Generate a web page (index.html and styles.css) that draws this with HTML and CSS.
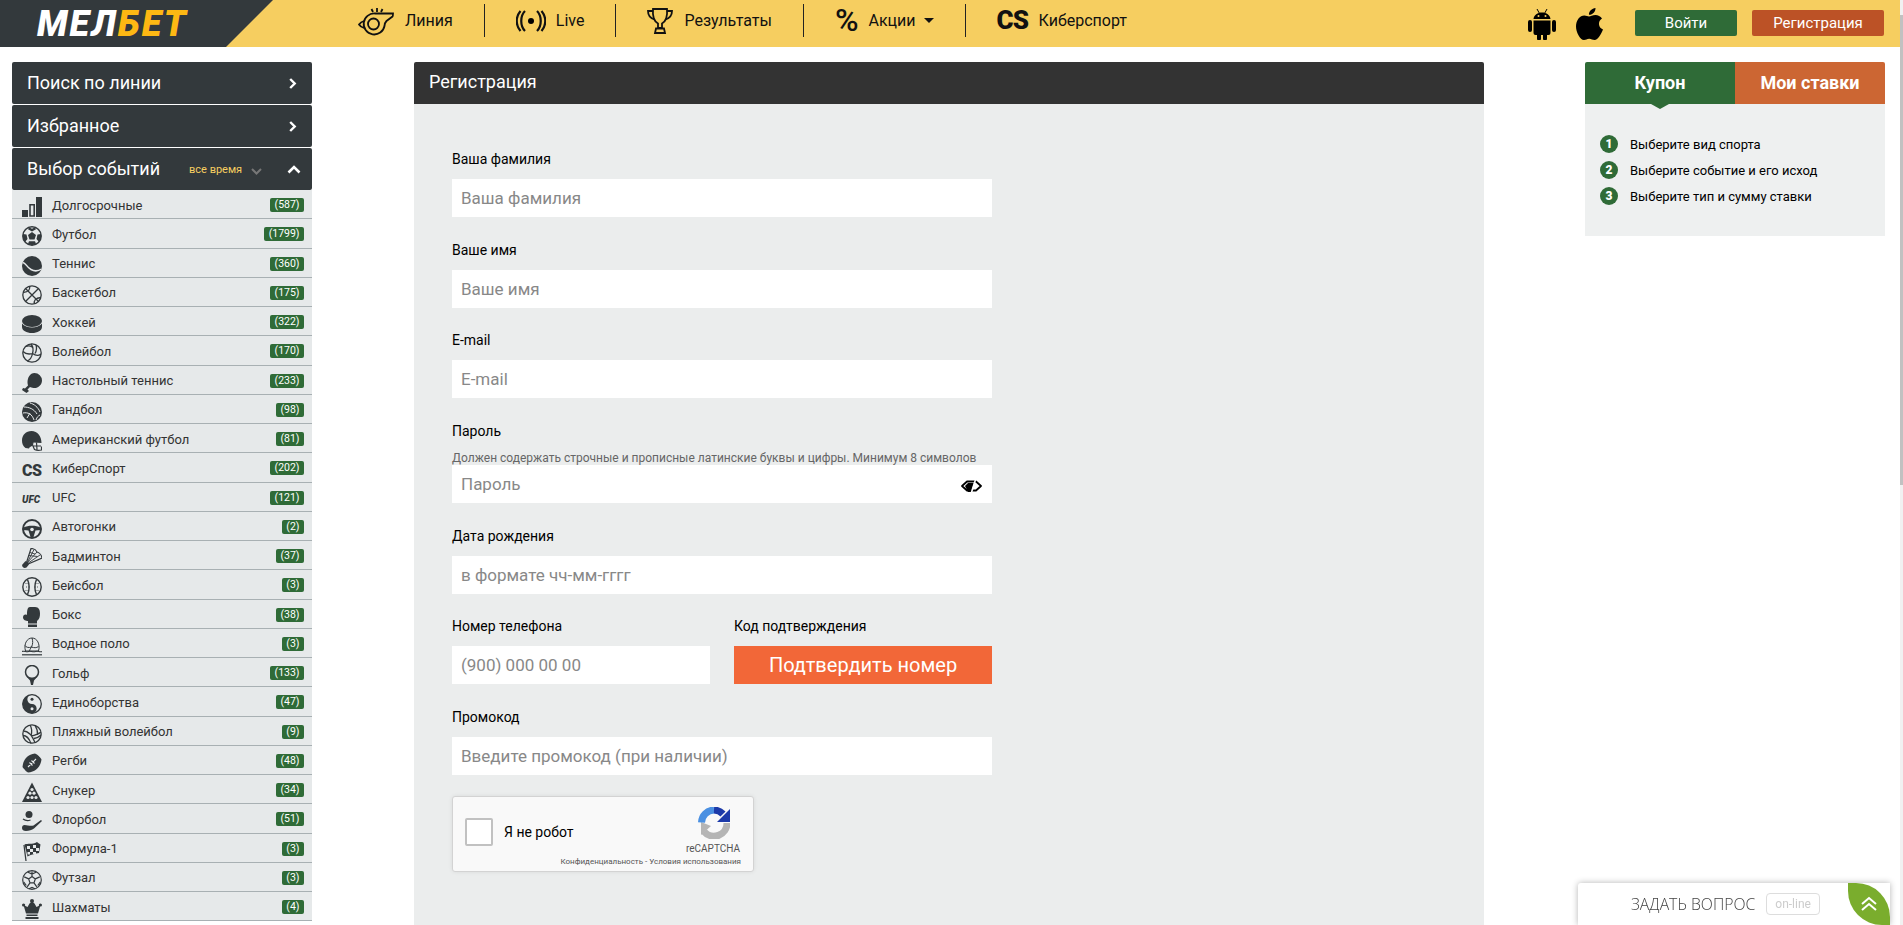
FILE: index.html
```html
<!DOCTYPE html>
<html lang="ru">
<head>
    <meta charset="utf-8">
    <title>Регистрация</title>
    <link rel="stylesheet" href="styles.css">
</head>
<body>
    <!-- sport icons -->
    <svg class="sprite" xmlns="http://www.w3.org/2000/svg">
        <symbol id="i-chev" viewBox="0 0 8 11"><path d="M1.200 1l4.500 4.500-4.500 4.500" fill="none" stroke="#fff" stroke-width="2.400"/></symbol>
        <symbol id="i-long" viewBox="0 0 20 20"><path d="M0 13h6v7H0zM14 0h6v20h-6z"/><path d="M8 7.800h4.200V19H8z" fill="none" stroke="currentColor" stroke-width="1.600"/></symbol>
        <symbol id="i-football" viewBox="0 0 20 20"><circle cx="10" cy="10" r="9.200" fill="none" stroke="currentColor" stroke-width="1.500"/><path d="M10 6l4 3-1.500 4.600h-5L6 9zM7 1.200l3 1.600 3-1.600 1 2-4 2.400-4-2.400zM1 8l3.500.5L5.500 13l-2.500 3L1 13zM19 8l-3.500.5L14.500 13l2.500 3 2-3zM7 15.200h6l1 2.500-4 1.600-4-1.600z"/></symbol>
        <symbol id="i-tennis" viewBox="0 0 20 20"><circle cx="10" cy="10" r="10"/><path d="M.8 6.500C4 7 4.500 11 9 13.500c3.500 2 7.500 1.500 10.500-.5" fill="none" stroke="#e6e9ea" stroke-width="1.500"/></symbol>
        <symbol id="i-basket" viewBox="0 0 20 20"><g fill="none" stroke="currentColor" stroke-width="1.300"><circle cx="10" cy="10" r="9.200"/><path d="M3.500 3.500l13 13M16.500 3.500l-13 13M7.500 1c1 3-.5 6-6.500 6.500M12.500 19c-1-3 .5-6 6.500-6.500"/></g></symbol>
        <symbol id="i-puck" viewBox="0 0 20 20"><ellipse cx="10" cy="7" rx="10" ry="6"/><path d="M0 9.500C2 12 6 13.500 10 13.500s8-1.500 10-4v3.500c0 3.500-4.500 6-10 6S0 16.500 0 13z"/></symbol>
        <symbol id="i-volley" viewBox="0 0 20 20"><g fill="none" stroke="currentColor" stroke-width="1.300"><circle cx="10" cy="10" r="9.200"/><path d="M9 1c2 2.500 2.500 6 1.500 9.500M10.500 10.500C7 11.500 3.500 11 1 8.500M10.500 10.500c2.500 1.800 6 2.500 8.500.5M10.500 10.500c-.5 3-2.500 6.500-5.500 7.500M14 2c1 3 .5 6-1 8.500M4 3.500c2.500-1 4.500-.5 6 .5"/></g></symbol>
        <symbol id="i-pong" viewBox="0 0 20 20"><path d="M12.500 0a7.500 7.500 0 0 1 7.500 7.500c0 4.500-4 8-8.500 7.500-1.500-.2-3-1-3.500-1L5.500 16.500 7 18l-2.500 2L0 17l1-2 2 .5L6 12.500c0-.5-.5-1.500-.5-3C5.500 4.500 8 0 12.500 0z"/></symbol>
        <symbol id="i-hand" viewBox="0 0 20 20"><circle cx="10" cy="10" r="10"/><path d="M2 5c5 0 10 2 13 7M1 11c5-1 9 1 11 7M8 1c4 1 8 4 10 9M18 13c-2 1-3 2-4 5M5 16l3-5" fill="none" stroke="#e6e9ea" stroke-width="1"/></symbol>
        <symbol id="i-helmet" viewBox="0 0 20 20"><path d="M9.500 0C4 0 0 4 0 9.500c0 3 1 5.500 3.500 7.500l3.500.5c.5-1.500 1.500-2 3-2.500l1-3.500 8.500.5C19.500 5 15.500 0 9.500 0z"/><path d="M11 11l-.5 3 2 4.500c2 1 4.500 1 7 .5v-3.500M11 15h8M14.500 11.500l.5 7" fill="none" stroke="currentColor" stroke-width="1.200"/></symbol>
        <symbol id="i-wheel" viewBox="0 0 20 20"><circle cx="10" cy="10" r="9" fill="none" stroke="currentColor" stroke-width="2"/><path d="M1.500 8.500C6 6 14 6 18.500 8.500V11l-5 .5-2 6.500h-3l-2-6.500-5-.5z"/><circle cx="10" cy="10.500" r="1.800" fill="#e6e9ea"/></symbol>
        <symbol id="i-shuttle" viewBox="0 0 20 20"><path d="M4.500 14.500L9 .5c3 0 5 1.500 6 3.500 2 .5 4.500 3 5 6L6 16z" fill="none" stroke="currentColor" stroke-width="1.200"/><path d="M5 15L12 1.500M5 15L15 4M5.500 15.500L18 7M6.500 7.500l9 1M8 4.500l5 1.500" fill="none" stroke="currentColor" stroke-width=".9"/><path d="M3.500 13l3.500 3.500-2.500 3c-2 1.200-4 .2-4.500-2.500z"/></symbol>
        <symbol id="i-base" viewBox="0 0 20 20"><g fill="none" stroke="currentColor" stroke-width="1.400"><circle cx="10" cy="10" r="9.200"/><path d="M5.500 2.500c2 4.500 2 10.500 0 15M14.500 2.500c-2 4.500-2 10.500 0 15"/></g><path d="M3.500 6.500h3M4 10h3M3.500 13.500h3M13.500 6.500h3M13 10h3M13.500 13.500h3" stroke="currentColor" stroke-width=".8" stroke-dasharray="1 1"/></symbol>
        <symbol id="i-box" viewBox="0 0 20 20"><path d="M8 0h5c4 0 5 3 5 6.500 0 3-.5 5.500-3 7.500v2.500H6V14c-2 0-5-1-5-3.500C1 8 3 7 5 8c0-3 0-8 3-8z"/><path d="M6 17.500h9V20H6z"/></symbol>
        <symbol id="i-polo" viewBox="0 0 20 20"><g fill="none" stroke="currentColor" stroke-width="1"><path d="M3.500 15C1.500 8 5 2 10 2s8.500 6 6.500 13zM10 2c1 3 1 6-.5 9M9.500 11C7 12 4 11.500 3 9.500M9.500 11c2.500 1 5 1 7-.5M9.500 11c-1 1.500-2 3-2 4"/><path d="M0 15.500c3-1 4 1 6.500 0s4 1 7 0 4 1 6.500 0" stroke-width="1.200"/><path d="M0 18.800h20" stroke-width="1.200"/></g></symbol>
        <symbol id="i-golf" viewBox="0 0 20 20"><circle cx="10" cy="7" r="6.500" fill="none" stroke="currentColor" stroke-width="1.500"/><path d="M4.500 11.500c2 1.800 9 1.800 11 0L12 15.500l-1 4.500H9l-1-4.500z"/></symbol>
        <symbol id="i-yin" viewBox="0 0 20 20"><circle cx="10" cy="10" r="9.300" fill="none" stroke="currentColor" stroke-width="1.300"/><path d="M10 .7a9.300 9.300 0 0 0 0 18.600 4.650 4.650 0 0 0 0-9.300 4.650 4.650 0 0 1 0-9.300z"/><circle cx="10" cy="5.300" r="1.500"/><circle cx="10" cy="14.700" r="1.500" fill="#e6e9ea"/></symbol>
        <symbol id="i-beach" viewBox="0 0 20 20"><g fill="none" stroke="currentColor" stroke-width="1.300"><circle cx="10" cy="10" r="9.200"/><path d="M1.500 7c4 0 8 3 11.500 11.500M1 11.500c3 0 6 2.500 8 8M8 1c2 3 2 7 1 11M13 1.500c2 3 3 6 2.500 9.500M9 12c3-.5 7-1.500 10-4M12 14.500c3-.5 5-1.500 7-3.500"/></g></symbol>
        <symbol id="i-rugby" viewBox="0 0 20 20"><path d="M13 .5C5 1.500 1 7 .5 14c1 2 3.500 4.500 5.500 5.500 7-.5 12.500-5 13.500-13C18.500 4 15.500 1.500 13 .5z"/><path d="M6 14l8-8M7.500 9.500l3 3M9.500 7.500l3 3M3 18L1 16M19 4l-2-2" fill="none" stroke="#e6e9ea" stroke-width="1.100"/></symbol>
        <symbol id="i-snooker" viewBox="0 0 20 20"><path d="M10 .5L20 20H0z"/><g fill="#e6e9ea"><circle cx="10" cy="7.500" r="1.600"/><circle cx="8" cy="11.200" r="1.600"/><circle cx="12" cy="11.200" r="1.600"/><circle cx="6" cy="15.500" r="1.600"/><circle cx="10" cy="15.500" r="1.600"/><circle cx="14" cy="15.500" r="1.600"/></g></symbol>
        <symbol id="i-floor" viewBox="0 0 20 20"><circle cx="7" cy="3.500" r="3.500"/><path d="M1 8c2 1.500 5 2 7.500 1" fill="none" stroke="currentColor" stroke-width="1.300"/><path d="M20 10l-8 7.500c-2 1.500-5 2.500-8 2.500-2.500 0-4-1-4-3s1-3 2.500-3c3 0 6 1.500 9 .5L19 9z"/></symbol>
        <symbol id="i-flag" viewBox="0 0 20 20"><path d="M4 20L2 4" stroke="currentColor" stroke-width="1.200"/><path d="M2.500 3.500C6 2 10 4 15 1c1 1 3 2 3.500 2.500L17 12c-4 1-7 1-11.500 3.500z"/><path d="M5 5h3v3H5zM11 4h3v3h-3zM8 8h3v3H8zM14 7h3v3h-3zM5.500 11h2.500v2.500H5.500zM11 11h3v2h-3z" fill="#e6e9ea"/></symbol>
        <symbol id="i-futsal" viewBox="0 0 20 20"><g fill="none" stroke="currentColor" stroke-width="1.200"><circle cx="10" cy="10" r="9.300"/><path d="M10 6.500l3.300 2.400-1.300 4h-4l-1.300-4zM10 6.500V1.500M13.300 8.900l4.500-2M12 12.900l2.800 4M8 12.900l-2.800 4M6.700 8.900l-4.500-2M6 2.200L10 4l4-1.800M1.800 12l2.500 3.500M18.200 12l-2.500 3.500M7 18.800L10 17.500l3 1.300"/></g></symbol>
        <symbol id="i-chess" viewBox="0 0 20 20"><circle cx="1.600" cy="6" r="1.600"/><circle cx="18.400" cy="6" r="1.600"/><circle cx="10" cy="2" r="2"/><path d="M1.500 6l4 2 2-3.500 2.500-2 2.500 2 2 3.500 4-2-2.500 8.500h-12zM4.500 15.500h11v1.500h-11zM3.500 18h13v2h-13z"/></symbol>
    </svg>

    <header class="header">
        <a class="logo-wrap" href="#"><span class="logo">МЕЛ<b>БЕТ</b></span></a>
        <nav class="nav">
            <a class="nav-item first" href="#">
                <svg class="whistle" width="36" height="32" viewBox="0 0 36 32"><g fill="none" stroke="#111" stroke-width="1.800"><path d="M35 8.500H17a10.500 10.500 0 1 0 9.500 12.500c0-2 .5-3.500 2-5l6-4.500c.5-.5.5-3 .5-3z"/><circle cx="15.500" cy="19" r="5.500"/><path d="M6 16c-2 .5-4 2-5 3.500 1 1.500 3 3 5 3.500"/><path d="M19 7V3M15 7l-1.500-3M23 7l1.500-3"/></g></svg>
                Линия
            </a>
            <a class="nav-item" href="#">
                <svg width="30" height="24" viewBox="0 0 30 24"><path d="M9 2C4 7 4 17 9 22M21 2c5 5 5 15 0 20M4.500 2C-.5 8-.5 16 4.500 22M25.500 2c5 6 5 14 0 20" fill="none" stroke="#111" stroke-width="2.200"/><circle cx="15" cy="12" r="3"/></svg>
                Live
            </a>
            <a class="nav-item" href="#">
                <svg class="trophy" width="26" height="26" viewBox="0 0 26 26"><g fill="none" stroke="#111" stroke-width="1.800"><path d="M6 1h14c.5 6-.5 12-5 14.500v4.500h-4v-4.500C6.500 13 5.500 7 6 1z"/><path d="M6 3H1c0 4 2 7 6.500 8.500M20 3h5c0 4-2 7-6.500 8.500"/><path d="M9 20.500h8l1 4.500H8z"/></g></svg>
                Результаты
            </a>
            <a class="nav-item" href="#">
                <span class="percent">%</span>
                Акции <i class="caret"></i>
            </a>
            <a class="nav-item last" href="#">
                <span class="cs-logo">CS</span>
                Киберспорт
            </a>
        </nav>
        <div class="header-right">
            <svg class="android" width="28" height="32" viewBox="0 0 28 32"><path d="M5.500 11C6 7 9.500 4.500 14 4.500S22 7 22.500 11zM5.500 12.500h17V25a2 2 0 0 1-2 2H19v3.500a2 2 0 0 1-4 0V27h-2v3.500a2 2 0 0 1-4 0V27H7.500a2 2 0 0 1-2-2z"/><rect y="12" width="4" height="12" rx="2"/><rect x="24" y="12" width="4" height="12" rx="2"/><path d="M9 1l2.500 4.500M19 1l-2.500 4.500" stroke="#000" stroke-width="1"/><circle cx="10.500" cy="8" r="1" fill="#f6ce60"/><circle cx="17.500" cy="8" r="1" fill="#f6ce60"/></svg>
            <svg class="apple" width="27" height="32" viewBox="0 0 27 32"><path d="M19.500 0c.2 3.500-3 7-6.500 6.800C12.500 3.500 16 .3 19.500 0zM13 8.500c1.500 0 3.500-1.500 6.500-1.500 2.500 0 5 1.300 6.500 3.500-4.500 2.700-3.800 9.200 1 11-1.500 4-5 10.500-8.500 10.500-2 0-3-1.300-5.300-1.300S10 32 8 32C4 32 0 24 0 18.500 0 12 4 7.500 8.300 7.500c2 0 3.500 1 4.700 1z"/></svg>
            <a class="btn btn-login" href="#">Войти</a>
            <a class="btn btn-reg" href="#">Регистрация</a>
        </div>
    </header>

    <div class="page">
        <aside class="sidebar">
            <div class="side-head"><span>Поиск по линии</span><svg class="chev"><use href="#i-chev"/></svg></div>
            <div class="side-head"><span>Избранное</span><svg class="chev"><use href="#i-chev"/></svg></div>
            <div class="side-head">
                <span>Выбор событий</span>
                <span class="period">все время
                    <svg width="11" height="7" viewBox="0 0 11 7"><path d="M1 1l4.500 4.500L10 1" fill="none" stroke="#777" stroke-width="2"/></svg>
                </span>
                <svg class="up" width="14" height="9" viewBox="0 0 14 9"><path d="M1.500 7.500L7 2l5.500 5.500" fill="none" stroke="#fff" stroke-width="2.600"/></svg>
            </div>
            <ul class="sports">
                <li><svg class="ico"><use href="#i-long"/></svg><span>Долгосрочные</span><em>(587)</em></li>
                <li><svg class="ico"><use href="#i-football"/></svg><span>Футбол</span><em>(1799)</em></li>
                <li><svg class="ico"><use href="#i-tennis"/></svg><span>Теннис</span><em>(360)</em></li>
                <li><svg class="ico"><use href="#i-basket"/></svg><span>Баскетбол</span><em>(175)</em></li>
                <li><svg class="ico"><use href="#i-puck"/></svg><span>Хоккей</span><em>(322)</em></li>
                <li><svg class="ico"><use href="#i-volley"/></svg><span>Волейбол</span><em>(170)</em></li>
                <li><svg class="ico"><use href="#i-pong"/></svg><span>Настольный теннис</span><em>(233)</em></li>
                <li><svg class="ico"><use href="#i-hand"/></svg><span>Гандбол</span><em>(98)</em></li>
                <li><svg class="ico"><use href="#i-helmet"/></svg><span>Американский футбол</span><em>(81)</em></li>
                <li><i class="ico-text cs-small">CS</i><span>КиберСпорт</span><em>(202)</em></li>
                <li><i class="ico-text ufc">UFC</i><span>UFC</span><em>(121)</em></li>
                <li><svg class="ico"><use href="#i-wheel"/></svg><span>Автогонки</span><em>(2)</em></li>
                <li><svg class="ico"><use href="#i-shuttle"/></svg><span>Бадминтон</span><em>(37)</em></li>
                <li><svg class="ico"><use href="#i-base"/></svg><span>Бейсбол</span><em>(3)</em></li>
                <li><svg class="ico"><use href="#i-box"/></svg><span>Бокс</span><em>(38)</em></li>
                <li><svg class="ico"><use href="#i-polo"/></svg><span>Водное поло</span><em>(3)</em></li>
                <li><svg class="ico"><use href="#i-golf"/></svg><span>Гольф</span><em>(133)</em></li>
                <li><svg class="ico"><use href="#i-yin"/></svg><span>Единоборства</span><em>(47)</em></li>
                <li><svg class="ico"><use href="#i-beach"/></svg><span>Пляжный волейбол</span><em>(9)</em></li>
                <li><svg class="ico"><use href="#i-rugby"/></svg><span>Регби</span><em>(48)</em></li>
                <li><svg class="ico"><use href="#i-snooker"/></svg><span>Снукер</span><em>(34)</em></li>
                <li><svg class="ico"><use href="#i-floor"/></svg><span>Флорбол</span><em>(51)</em></li>
                <li><svg class="ico"><use href="#i-flag"/></svg><span>Формула-1</span><em>(3)</em></li>
                <li><svg class="ico"><use href="#i-futsal"/></svg><span>Футзал</span><em>(3)</em></li>
                <li><svg class="ico"><use href="#i-chess"/></svg><span>Шахматы</span><em>(4)</em></li>
            </ul>
        </aside>

        <main class="main">
            <h1 class="main-head">Регистрация</h1>
            <form class="form">
                <div class="field">
                    <label>Ваша фамилия</label>
                    <input class="input" placeholder="Ваша фамилия">
                </div>
                <div class="field">
                    <label>Ваше имя</label>
                    <input class="input" placeholder="Ваше имя">
                </div>
                <div class="field">
                    <label>E-mail</label>
                    <input class="input" placeholder="E-mail">
                </div>
                <div class="field">
                    <label class="label-hint">Пароль</label>
                    <div class="hint">Должен содержать строчные и прописные латинские буквы и цифры. Минимум 8 символов</div>
                    <div class="pass">
                        <input class="input" placeholder="Пароль">
                        <svg class="eye" width="21" height="16" viewBox="0 0 21 16"><path d="M1 8l5-4.500h9L20 8l-5 4.500H6z" fill="none" stroke="#000" stroke-width="1.800" stroke-linejoin="round"/><path d="M4 8l3-3h6l-3 9H7z"/><path d="M15 0L10 16" stroke="#fff" stroke-width="1.600"/></svg>
                    </div>
                </div>
                <div class="field">
                    <label>Дата рождения</label>
                    <input class="input" placeholder="в формате чч-мм-гггг">
                </div>
                <div class="field-row">
                    <div class="field">
                        <label>Номер телефона</label>
                        <input class="input" placeholder="(900) 000 00 00">
                    </div>
                    <div class="field">
                        <label>Код подтверждения</label>
                        <button class="confirm" type="button">Подтвердить номер</button>
                    </div>
                </div>
                <div class="field promo">
                    <label>Промокод</label>
                    <input class="input" placeholder="Введите промокод (при наличии)">
                </div>
                <div class="captcha">
                    <div class="captcha-box"></div>
                    <div class="captcha-text">Я не робот</div>
                    <svg class="captcha-logo" width="32" height="32" viewBox="0 0 32 32"><path d="M29 16a13 13 0 0 1-23 8.500" fill="none" stroke="#b5b5b5" stroke-width="7"/><path d="M3 15v13l10-9z" fill="#b5b5b5"/><path d="M3.500 15.500A13 13 0 0 1 16 3" fill="none" stroke="#4a90e2" stroke-width="7"/><path d="M16 3a13 13 0 0 1 9 4" fill="none" stroke="#1c3aa9" stroke-width="7"/><path d="M32 15V2L19 15z" fill="#1c3aa9"/></svg>
                    <div class="captcha-brand">reCAPTCHA</div>
                    <div class="captcha-links">Конфиденциальность - Условия использования</div>
                </div>
            </form>
        </main>

        <aside class="coupon">
            <div class="tabs">
                <div class="tab tab-active">Купон</div>
                <div class="tab tab-bets">Мои ставки</div>
            </div>
            <ol class="steps">
                <li><b>1</b>Выберите вид спорта</li>
                <li><b>2</b>Выберите событие и его исход</li>
                <li><b>3</b>Выберите тип и сумму ставки</li>
            </ol>
        </aside>
    </div>

    <div class="chat">
        <span class="chat-title">ЗАДАТЬ ВОПРОС</span>
        <span class="chat-status">on-line</span>
        <div class="chat-leaf">
            <svg width="18" height="16" viewBox="0 0 18 16"><path d="M2 8l7-6 7 6M2 14l7-6 7 6" fill="none" stroke="#fff" stroke-width="2"/></svg>
        </div>
    </div>
    <div class="scrollbar"><div class="scrollbar-thumb"></div></div>
</body>
</html>
```

FILE: styles.css
```css
html, body { height: 925px; overflow: hidden; }
body { margin: 0; background: #fff; font-family: Roboto, "Liberation Sans", sans-serif; color: #000; }
a { color: inherit; text-decoration: none; }
.sprite { display: none; }

/* header */
.header { display: flex; align-items: center; width: 1900px; height: 47px; background: #f6ce60; }
.logo-wrap { display: flex; align-items: center; width: 273px; height: 47px; padding-left: 37px; box-sizing: border-box; background: #33393c; clip-path: polygon(0 0, 100% 0, 226px 100%, 0 100%); }
.logo { font-size: 36px; font-weight: 900; font-style: italic; color: #fff; letter-spacing: 2px; }
.logo b { color: #fdb813; font-weight: 900; }
.nav { display: flex; align-items: center; margin: 0 0 6px 85px; }
.nav-item { display: flex; align-items: center; gap: 10px; height: 33px; padding: 0 31px; border-right: 1px solid #222; font-size: 16px; color: #111; }
.nav-item.first { padding-left: 0; }
.nav-item.last { border-right: 0; }
.whistle { margin-right: 1px; }
.trophy { margin-right: 1px; }
.percent { font-size: 32px; font-weight: 500; line-height: 33px; }
.caret { width: 0; height: 0; margin-left: -2px; border-left: 5px solid transparent; border-right: 5px solid transparent; border-top: 5px solid #111; }
.cs-logo { width: 32px; font-size: 26px; font-weight: 900; line-height: 33px; letter-spacing: -1px; }
.header-right { display: flex; align-items: center; margin: 0 0 0 auto; padding-right: 16px; }
.android { margin-right: 20px; }
.apple { margin-right: 32px; }
.btn { display: block; height: 26px; margin-bottom: 2px; line-height: 26px; border-radius: 2px; color: #fff; font-size: 15px; text-align: center; }
.btn-login { width: 102px; margin-right: 15px; background: #2f6b37; }
.btn-reg { width: 132px; background: #bc5226; }

/* columns */
.page { display: flex; align-items: flex-start; padding: 15px 0 0 12px; }
.sidebar { width: 300px; }
.main { width: 1070px; margin-left: 102px; }
.coupon { width: 300px; margin-left: 101px; }

/* left menu */
.side-head { display: flex; align-items: center; height: 42px; margin-bottom: 1px; padding: 0 15px 2px; box-sizing: border-box; background: #33393c; border-radius: 2px; color: #fff; font-size: 18px; }
.side-head:nth-child(3) { margin-bottom: 0; }
.chev { width: 8px; height: 11px; margin: 2px 0 0 auto; }
.period { margin: 3px 0 0 29px; color: #f6ce60; font-size: 11px; }
.period svg { margin-left: 6px; vertical-align: -2px; }
.up { margin: 3px -4px 0 auto; }
.sports { margin: 0; padding: 0; list-style: none; }
.sports li { display: flex; align-items: center; height: 29.25px; padding: 2px 8px 0 10px; box-sizing: border-box; background: #e6e9ea; border-bottom: 1px solid #a8b0b3; font-size: 13px; color: #333; }
.ico { width: 20px; height: 20px; margin-top: 4px; color: #33393c; fill: currentColor; flex: none; }
.ico-text { width: 20px; flex: none; font-style: normal; color: #33393c; }
.cs-small { font-size: 16px; font-weight: 900; letter-spacing: -.5px; margin-top: 4px; }
.ufc { font-size: 10px; font-weight: 900; font-style: italic; margin-top: 4px; }
.sports span { margin-left: 10px; }
.sports em { margin-left: auto; padding: 0 4.500px; height: 14px; line-height: 14px; background: #2f6b37; border-radius: 2px; color: #fff; font-size: 10.500px; font-style: normal; }

/* registration form */
.main-head { margin: 0; height: 42px; padding: 0 0 2px 15px; box-sizing: border-box; background: #333; border-radius: 2px 2px 0 0; color: #fff; font-size: 18px; font-weight: 400; line-height: 40px; }
.form { height: 821px; padding: 45.200px 0 0 38px; box-sizing: border-box; background: #ebeded; }
.field { width: 540px; margin-bottom: 22.500px; }
.field label { display: block; height: 30px; font-size: 14px; line-height: 20px; }
.field .label-hint { height: 20px; }
.hint { height: 24.500px; padding-top: 9px; box-sizing: border-box; color: #666; font-size: 12px; line-height: 16px; }
.input { display: block; width: 100%; height: 38px; padding: 0 9px; box-sizing: border-box; border: 0; outline: 0; background: #fff; font-family: inherit; font-size: 17px; border-radius: 0; }
.input::placeholder { color: #888; opacity: 1; }
.pass { position: relative; }
.eye { position: absolute; right: 10px; top: 13px; }
.field-row { display: flex; gap: 24px; width: 540px; }
.field-row .field { width: 258px; }
.confirm { display: block; width: 100%; height: 38px; border: 0; background: #f26738; color: #fff; font-family: inherit; font-size: 20px; }
.promo { margin-bottom: 21px; }

/* captcha */
.captcha { position: relative; width: 302px; height: 76px; box-sizing: border-box; background: #f9f9f9; border: 1px solid #d3d3d3; border-radius: 3px; box-shadow: 0 0 4px rgba(0,0,0,.08); }
.captcha-box { position: absolute; left: 12px; top: 21px; width: 28px; height: 28px; box-sizing: border-box; background: #fff; border: 2px solid #c1c1c1; border-radius: 2px; }
.captcha-text { position: absolute; left: 51px; top: 26px; font-size: 14px; line-height: 18px; }
.captcha-logo { position: absolute; left: 245px; top: 10px; }
.captcha-brand { position: absolute; right: 13px; top: 46px; color: #555; font-size: 10px; line-height: 12px; }
.captcha-links { position: absolute; right: 12px; top: 60px; color: #555; font-size: 8px; line-height: 10px; white-space: nowrap; }

/* coupon */
.tabs { display: flex; }
.tab { position: relative; width: 150px; height: 42px; color: #fff; font-size: 18px; font-weight: 700; line-height: 42px; text-align: center; }
.tab-active { background: #2f6b37; border-radius: 2px 0 0 0; }
.tab-active:after { content: ""; position: absolute; left: 66px; top: 42px; border-left: 9px solid transparent; border-right: 9px solid transparent; border-top: 5px solid #2f6b37; }
.tab-bets { background: #cc6633; border-radius: 0 2px 0 0; }
.steps { height: 132px; margin: 0; padding: 27px 0 0 15px; box-sizing: border-box; background: #eef0f0; list-style: none; font-size: 13px; }
.steps li { display: flex; align-items: center; height: 26.200px; }
.steps b { width: 18px; height: 18px; margin-right: 12px; background: #2f6b37; border-radius: 50%; color: #fff; font-size: 12px; font-weight: 900; line-height: 18px; text-align: center; }

/* chat widget */
.chat { position: fixed; left: 1578px; bottom: 0; display: flex; align-items: center; width: 312px; height: 42px; box-sizing: border-box; padding-left: 53px; background: #fff; border-radius: 3px 0 0 0; box-shadow: 0 0 6px rgba(0,0,0,.3); }
.chat-title { color: #444; font-family: "Open Sans", sans-serif; font-size: 15.800px; font-weight: 300; }
.chat-status { margin-left: 11px; padding: 3px 8px; border: 1px solid #ddd; border-radius: 4px; color: #ccc; font-size: 12px; }
.chat-leaf { position: absolute; right: 0; top: 0; display: flex; align-items: center; justify-content: center; width: 42px; height: 42px; background: #7aad2d; border-radius: 0 34px 0 34px; }

/* page scrollbar */
.scrollbar { position: fixed; right: 0; top: 0; width: 3px; height: 925px; background: #f1f1f1; }
.scrollbar-thumb { height: 470px; margin-top: 15px; background: #c1c1c1; }
```
